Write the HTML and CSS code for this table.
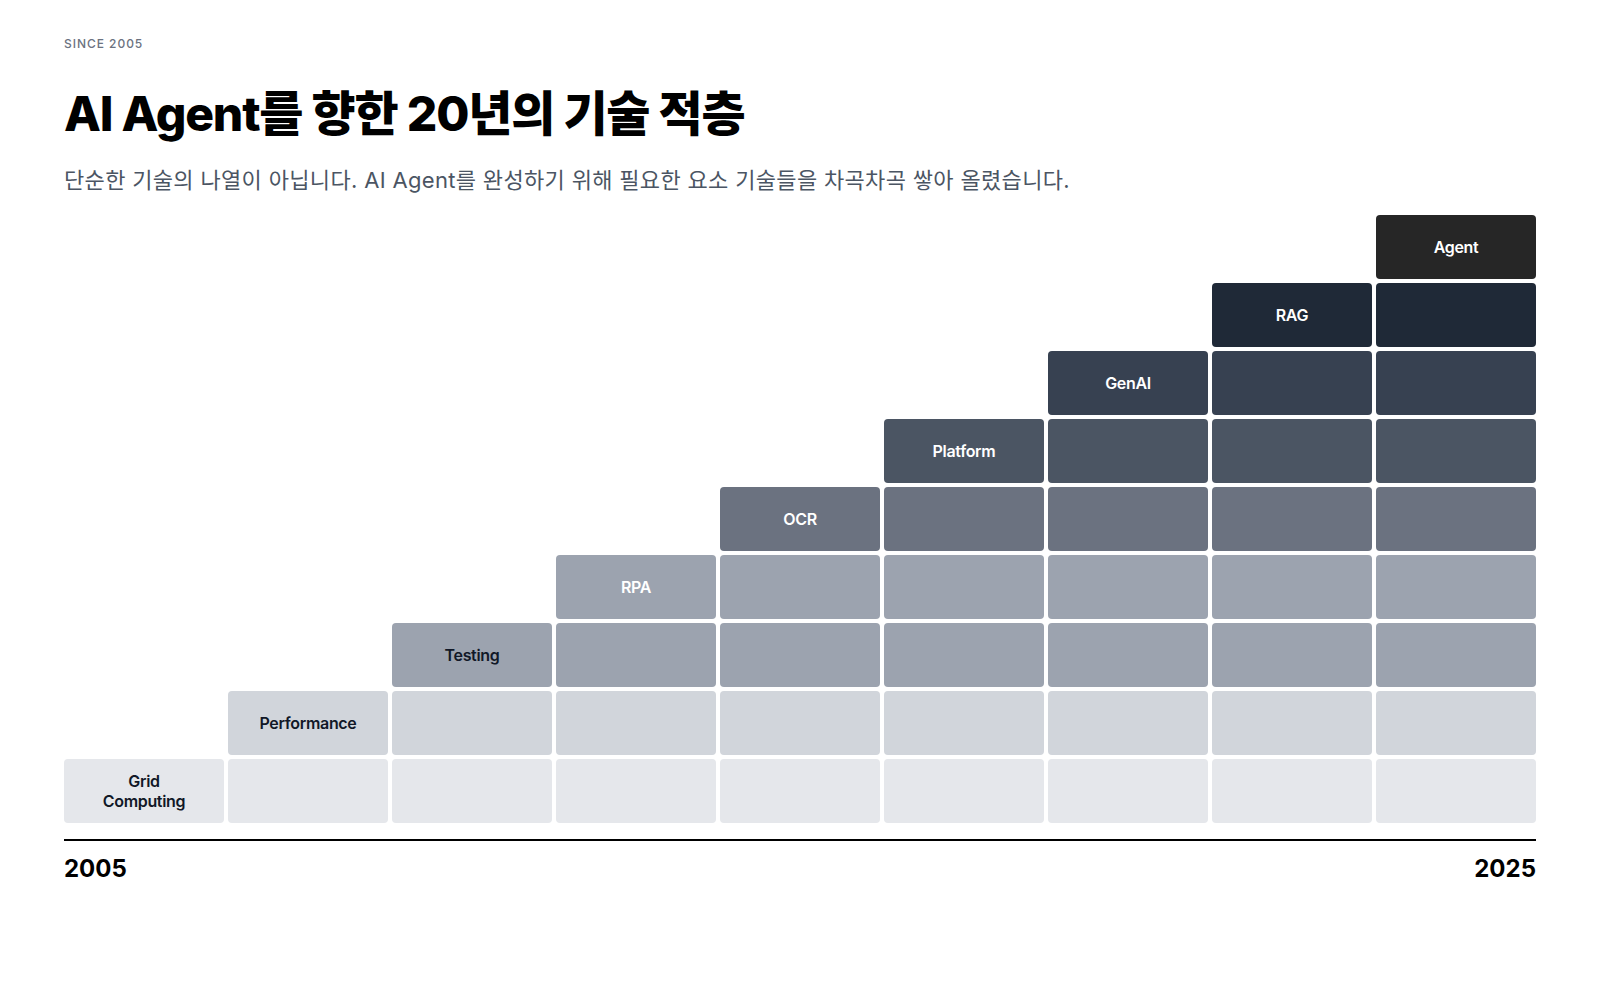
FILE: index.html
```html
<!DOCTYPE html>
<html lang="ko">
<head>
<meta charset="utf-8">
<title>AI Agent를 향한 20년의 기술 적층</title>
<link rel="stylesheet" href="styles.css">
</head>
<body>
<main class="page">
  <header class="head">
    <div class="eyebrow">SINCE 2005</div>
    <h1 class="title">AI Agent를 향한 20년의 기술 적층</h1>
    <p class="subtitle">단순한 기술의 나열이 아닙니다. AI Agent를 완성하기 위해 필요한 요소 기술들을 차곡차곡 쌓아 올렸습니다.</p>
  </header>

  <section class="chart">
    <div class="col">
      <div class="cell r0">Grid Computing</div>
    </div>
    <div class="col">
      <div class="cell r1">Performance</div>
      <div class="cell r0"></div>
    </div>
    <div class="col">
      <div class="cell r2">Testing</div>
      <div class="cell r1"></div>
      <div class="cell r0"></div>
    </div>
    <div class="col">
      <div class="cell r3">RPA</div>
      <div class="cell r2"></div>
      <div class="cell r1"></div>
      <div class="cell r0"></div>
    </div>
    <div class="col">
      <div class="cell r4">OCR</div>
      <div class="cell r3"></div>
      <div class="cell r2"></div>
      <div class="cell r1"></div>
      <div class="cell r0"></div>
    </div>
    <div class="col">
      <div class="cell r5">Platform</div>
      <div class="cell r4"></div>
      <div class="cell r3"></div>
      <div class="cell r2"></div>
      <div class="cell r1"></div>
      <div class="cell r0"></div>
    </div>
    <div class="col">
      <div class="cell r6">GenAI</div>
      <div class="cell r5"></div>
      <div class="cell r4"></div>
      <div class="cell r3"></div>
      <div class="cell r2"></div>
      <div class="cell r1"></div>
      <div class="cell r0"></div>
    </div>
    <div class="col">
      <div class="cell r7">RAG</div>
      <div class="cell r6"></div>
      <div class="cell r5"></div>
      <div class="cell r4"></div>
      <div class="cell r3"></div>
      <div class="cell r2"></div>
      <div class="cell r1"></div>
      <div class="cell r0"></div>
    </div>
    <div class="col">
      <div class="cell r8">Agent</div>
      <div class="cell r7"></div>
      <div class="cell r6"></div>
      <div class="cell r5"></div>
      <div class="cell r4"></div>
      <div class="cell r3"></div>
      <div class="cell r2"></div>
      <div class="cell r1"></div>
      <div class="cell r0"></div>
    </div>
  </section>

  <div class="axis"></div>
  <div class="years">
    <span class="year">2005</span>
    <span class="year">2025</span>
  </div>
</main>
</body>
</html>
```

FILE: styles.css
```css
* { box-sizing: border-box; }

html, body {
  margin: 0;
  padding: 0;
  background: #ffffff;
}

body {
  font-family: "Inter", "Noto Sans CJK KR", sans-serif;
  color: #000000;
}

.page {
  padding: 36px 64px 0;
  width: 1600px;
}

.head {
  display: flex;
  flex-direction: column;
}

.eyebrow {
  font-size: 12px;
  line-height: 16px;
  font-weight: 500;
  letter-spacing: 0.08em;
  color: #6b7280;
}

.title {
  margin: 33px 0 0;
  font-size: 48px;
  line-height: 58px;
  font-weight: 800;
  letter-spacing: -0.025em;
  color: #000000;
}

.subtitle {
  margin: 22px 0 0;
  font-size: 22px;
  line-height: 30px;
  font-weight: 400;
  color: #4b5563;
  letter-spacing: 0.015em;
}

.chart {
  margin-top: 20px;
  height: 608px;
  display: grid;
  grid-template-columns: repeat(9, 1fr);
  column-gap: 4px;
  align-items: end;
}

.col {
  display: flex;
  flex-direction: column;
  gap: 4px;
}

.cell {
  height: 64px;
  border-radius: 4px;
  display: flex;
  align-items: center;
  justify-content: center;
  text-align: center;
  padding: 0 24px 1px;
  font-size: 16px;
  line-height: 20px;
  font-weight: 600;
  letter-spacing: -0.02em;
  color: #ffffff;
}

.r0 { background: #e5e7eb; color: #111827; }
.r1 { background: #d1d5db; color: #111827; }
.r2 { background: #9ca3af; color: #111827; }
.r3 { background: #9ca3af; }
.r4 { background: #6b7280; }
.r5 { background: #4b5563; }
.r6 { background: #374151; }
.r7 { background: #1f2937; }
.r8 { background: #262626; }

.axis {
  margin-top: 16px;
  height: 2px;
  background: #000000;
}

.years {
  margin-top: 13px;
  display: flex;
  justify-content: space-between;
}

.year {
  font-size: 24px;
  line-height: 30px;
  font-weight: 700;
  color: #000000;
}
```
